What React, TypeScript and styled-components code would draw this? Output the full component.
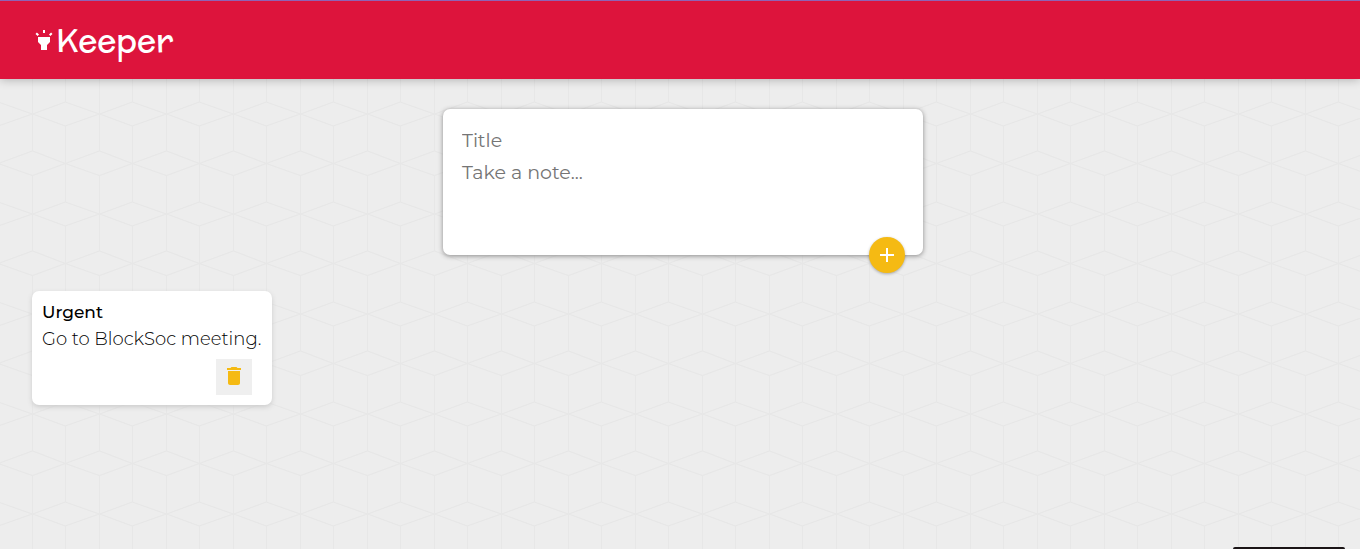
import React, { useState } from "react";
import styled, { createGlobalStyle } from "styled-components";

const cubeTile = encodeURIComponent(
  `<svg xmlns="http://www.w3.org/2000/svg" width="67" height="100" viewBox="0 0 67 100">
    <g fill="none" stroke="#e7e7e7">
      <path d="M32.5 0V51M32.5 75V100M65.5 26V100M65.5 0V2"/>
      <path stroke-width="1.2" d="M-1.5 2L32.5 14L65.5 2L99.5 14M-1.5 26L32.5 14L65.5 26L99.5 14"/>
      <path stroke-width="1.2" d="M-1.5 63.500L32.5 51L65.5 63.500L99.5 51M-1.5 63.500L32.5 75.500L65.5 63.500L99.5 75.500"/>
    </g>
  </svg>`
);

const GlobalStyle = createGlobalStyle`
  * {
    box-sizing: border-box;
    margin: 0;
    padding: 0;
  }
  body {
    min-height: 100vh;
    background: #ededed url("data:image/svg+xml,${cubeTile}") 0 0 repeat;
    font-family: Montserrat, "DejaVu Sans", sans-serif;
    color: #000;
  }
`;

const Header = styled.header`
  display: flex;
  align-items: center;
  height: 79px;
  padding: 0 32px;
  border-top: 1px solid #8f63b5;
  background: #dd143c;
  box-shadow: 0 0 10px rgba(0, 0, 0, 0.3);
`;

const Brand = styled.h1`
  display: flex;
  align-items: center;
  color: #fff;
  font-family: McLaren, "DejaVu Sans", sans-serif;
  font-size: 32px;
  font-weight: 400;
  line-height: 48px;
`;

const Icon = styled.svg`
  display: block;
  width: 24px;
  height: 24px;
  flex: none;
  fill: currentColor;
`;

const Main = styled.main`
  padding: 30px 26px 30px 32px;
`;

const NoteForm = styled.form`
  position: relative;
  display: flex;
  flex-direction: column;
  width: 480px;
  max-width: 100%;
  height: 146px;
  margin: 0 auto 36px;
  padding: 15px;
  border-radius: 7px;
  background: #fff;
  box-shadow: 0 1px 5px #8a8989;
`;

const fieldStyle = `
  width: 100%;
  padding: 4px;
  border: none;
  outline: none;
  background: transparent;
  font-family: inherit;
  font-size: 19px;
  line-height: 26px;
  resize: none;
  &::placeholder {
    color: #757575;
    opacity: 1;
  }
`;

const TitleInput = styled.input`
  ${fieldStyle}
  height: 32px;
`;

const NoteInput = styled.textarea`
  ${fieldStyle}
  height: 82px;
`;

const AddButton = styled.button`
  position: absolute;
  right: 18px;
  bottom: -18px;
  display: flex;
  align-items: center;
  justify-content: center;
  width: 36px;
  height: 36px;
  border: none;
  border-radius: 50%;
  background: #f5ba13;
  color: #fff;
  box-shadow: 0 1px 3px rgba(0, 0, 0, 0.3);
  cursor: pointer;
`;

const Notes = styled.section`
  display: flex;
  flex-wrap: wrap;
  gap: 16px;
`;

const Card = styled.article`
  display: flex;
  flex-direction: column;
  width: 240px;
  padding: 10px;
  border-radius: 7px;
  background: #fff;
  box-shadow: 0 2px 5px #ccc;
`;

const CardTitle = styled.h2`
  margin-bottom: 4px;
  font-size: 17px;
  font-weight: 500;
  line-height: 22px;
`;

const CardText = styled.p`
  margin-bottom: 8px;
  font-size: 18px;
  font-weight: 300;
  line-height: 24px;
  white-space: nowrap;
`;

const DeleteButton = styled.button`
  align-self: flex-end;
  display: flex;
  justify-content: center;
  width: 36px;
  height: 36px;
  margin-right: 10px;
  padding-top: 5px;
  border: none;
  background: #efefef;
  color: #f5ba13;
  cursor: pointer;
`;

const StatusBar = styled.div`
  position: fixed;
  right: 15px;
  bottom: 0;
  width: 112px;
  height: 2px;
  border-radius: 2px 2px 0 0;
  background: #1a1416;
`;

const HighlightIcon = () => (
  <Icon viewBox="0 0 24 24" aria-hidden="true">
    <path d="M6 14l3 3v5h6v-5l3-3V9H6zm5-12h2v3h-2zM3.5 5.875L4.914 4.46l2.12 2.122L5.62 7.997zm13.46.71l2.123-2.12 1.414 1.414L18.375 8z" />
  </Icon>
);

const AddIcon = () => (
  <Icon viewBox="0 0 24 24" aria-hidden="true">
    <path d="M19 13h-6v6h-2v-6H5v-2h6V5h2v6h6v2z" />
  </Icon>
);

const DeleteIcon = () => (
  <Icon viewBox="0 0 24 24" aria-hidden="true">
    <path d="M6 19c0 1.1.9 2 2 2h8c1.1 0 2-.9 2-2V7H6v12zM19 4h-3.5l-1-1h-5l-1 1H5v2h14V4z" />
  </Icon>
);

interface Note {
  id: number;
  title: string;
  content: string;
}

export default function App() {
  const [notes, setNotes] = useState<Note[]>([
    { id: 1, title: "Urgent", content: "Go to BlockSoc meeting." },
  ]);
  const [title, setTitle] = useState("");
  const [content, setContent] = useState("");

  const addNote = (event: React.FormEvent) => {
    event.preventDefault();
    setNotes((current) => [...current, { id: Date.now(), title, content }]);
    setTitle("");
    setContent("");
  };

  return (
    <>
      <GlobalStyle />
      <Header>
        <Brand>
          <HighlightIcon />
          Keeper
        </Brand>
      </Header>
      <Main>
        <NoteForm onSubmit={addNote}>
          <TitleInput
            aria-label="Title"
            placeholder="Title"
            value={title}
            onChange={(e) => setTitle(e.target.value)}
          />
          <NoteInput
            aria-label="Note"
            placeholder="Take a note..."
            value={content}
            onChange={(e) => setContent(e.target.value)}
          />
          <AddButton type="submit" aria-label="Add note">
            <AddIcon />
          </AddButton>
        </NoteForm>
        <Notes>
          {notes.map((note) => (
            <Card key={note.id}>
              <CardTitle>{note.title}</CardTitle>
              <CardText>{note.content}</CardText>
              <DeleteButton
                type="button"
                aria-label="Delete note"
                onClick={() => setNotes((all) => all.filter((n) => n.id !== note.id))}
              >
                <DeleteIcon />
              </DeleteButton>
            </Card>
          ))}
        </Notes>
      </Main>
      <StatusBar />
    </>
  );
}
